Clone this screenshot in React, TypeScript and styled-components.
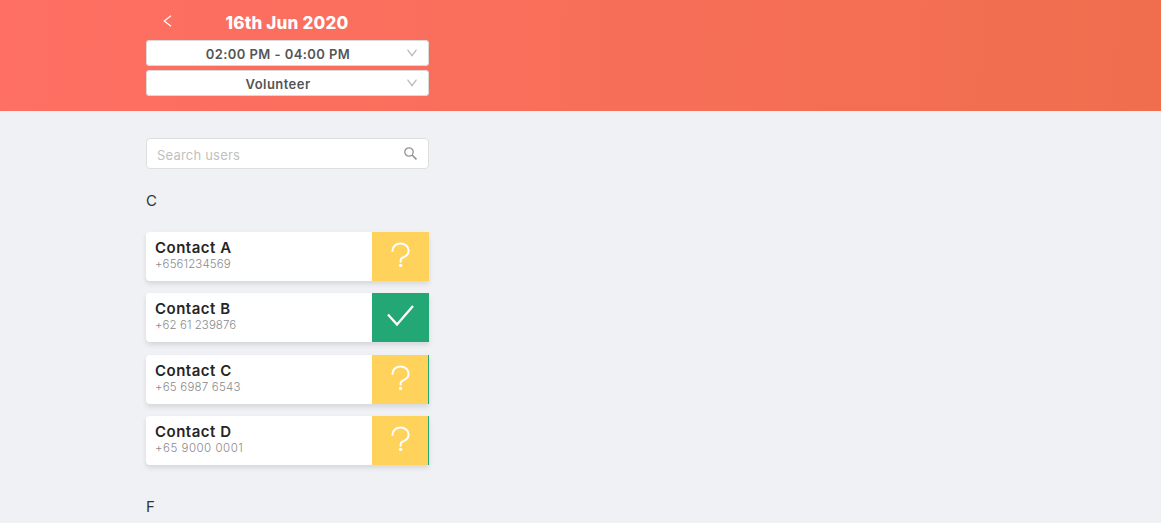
import styled, { createGlobalStyle } from "styled-components"


const GlobalStyle = createGlobalStyle`
	* {
		box-sizing: border-box;
	}

	body {
		margin: 0;
		background-color: #eff1f5;
		font-family: Gotham, Inter, sans-serif;
		overflow: hidden;
	}
`

const Page = styled.div`
	height: 523px;
	overflow: hidden;
`

const Header = styled.header`
	height: 111px;
	padding: 6px 0 0 146px;
	background: linear-gradient(93deg, #ff6f64 0%, #f06e4e 100%);
`

const Column = styled.div`
	width: 283px;
`

const TitleBar = styled.div`
	height: 34px;
	display: flex;
	align-items: flex-start;
`

const BackButton = styled.button`
	width: 42px;
	height: 30px;
	padding: 0 0 0 16px;
	border: none;
	background: none;
	display: flex;
	align-items: center;
`

const Title = styled.h1`
	flex: 1;
	margin: 0;
	padding-right: 43px;
	color: white;
	font-size: 17px;
	font-weight: 800;
	line-height: 34px;
	letter-spacing: 0.2px;
	text-align: center;
`

const Select = styled.div<{ $spacing: number }>`
	height: 26px;
	margin-bottom: 4px;
	padding: 1px 11px 0 4px;
	border-radius: 4px;
	background-color: white;
	box-shadow: inset 0 0 0 1px #dcd8d8;
	display: flex;
	align-items: center;
	color: #555;
	font-size: 13px;
	font-weight: 600;
	letter-spacing: ${({ $spacing }) => $spacing}px;

	span {
		flex: 1;
		text-align: center;
	}

	svg {
		margin-top: -2px;
	}
`

const Content = styled.main`
	padding: 27px 0 0 146px;
`

const Search = styled.label`
	height: 31px;
	padding: 0 11px 0 10px;
	border: 1px solid #dddfdf;
	border-radius: 4px;
	background-color: white;
	display: flex;
	align-items: center;

	input {
		flex: 1;
		min-width: 0;
		padding: 2px 0 0;
		border: none;
		outline: none;
		background: none;
		font-family: inherit;
		font-size: 13px;
		letter-spacing: 0.2px;
	}

	input::placeholder {
		color: #bfbfbf;
		opacity: 1;
	}
`

const Letter = styled.h2`
	height: 20px;
	margin: 22px 0 21px;
	color: #333;
	font-size: 15px;
	font-weight: 400;
	line-height: 20px;
`

const Contacts = styled.section`
	display: flex;
	flex-direction: column;
	gap: 12.3px;
	margin-bottom: 32px;
`

const Card = styled.article`
	height: 49px;
	border-radius: 4px 0 0 4px;
	background-color: white;
	box-shadow: 0 3px 5px rgba(0, 0, 0, 0.11);
	display: flex;
`

const Details = styled.div`
	width: 226px;
	padding: 6px 0 0 9px;
`

const Name = styled.div`
	color: #252525;
	font-size: 15px;
	font-weight: 600;
	line-height: 19px;
	letter-spacing: 0.5px;
`

const Phone = styled.div<{ $spacing: number }>`
	color: #8a8a8a;
	font-size: 11.5px;
	font-weight: 300;
	line-height: 14px;
	letter-spacing: ${({ $spacing }) => $spacing}px;
`

const Status = styled.div<{ $confirmed: boolean, $edge: boolean }>`
	width: 57px;
	border-right: ${({ $edge }) => $edge ? "1px solid #22a775" : "none"};
	background-color: ${({ $confirmed }) => $confirmed ? "#22a775" : "#ffd25c"};

	svg {
		display: block;
	}
`

const contacts = [
	{ name: "Contact A", phone: "+6561234569", spacing: 0.1, confirmed: false, edge: false },
	{ name: "Contact B", phone: "+62 61 239876", spacing: 0.05, confirmed: true, edge: false },
	{ name: "Contact C", phone: "+65 6987 6543", spacing: 0.2, confirmed: false, edge: true },
	{ name: "Contact D", phone: "+65 9000 0001", spacing: 0.5, confirmed: false, edge: true },
]

const Chevron = () => (
	<svg width="12" height="8" viewBox="0 0 12 8" fill="none" stroke="#b5b5b5" strokeWidth="1.1">
		<path d="M1.5 .6 6 6.7 10.5 .6" />
	</svg>
)

const StatusIcon = ({ confirmed }: { confirmed: boolean }) => (
	<svg width="56" height="49" viewBox="0 0 56 49" fill="none" stroke="white" strokeWidth="2">
		{confirmed
			? <path d="M16 21.5 25 31.5 41 13" strokeWidth="2.3" />
			: <>
				<path d="M20.5 19.7V18.5C20.5 14.5 24 11.4 28.5 11.4S36.6 14.4 36.6 18.5C36.6 21.9 34.3 24.2 31.6 25.2C29.6 25.9 28.6 27 28.6 28.6V30.4" />
				<circle cx="28.6" cy="33.4" r="1.7" fill="white" stroke="none" />
			</>}
	</svg>
)

const App = () => {
	return <Page>
		<GlobalStyle />
		<Header>
			<Column>
				<TitleBar>
					<BackButton aria-label="Back">
						<svg width="11" height="12" viewBox="0 0 11 12" fill="none" stroke="white" strokeWidth="1.2">
							<path d="M9 .8 2.3 6 9 11.2" />
						</svg>
					</BackButton>
					<Title>16th Jun 2020</Title>
				</TitleBar>
				<Select $spacing={0.43}>
					<span>02:00 PM - 04:00 PM</span>
					<Chevron />
				</Select>
				<Select $spacing={0.45}>
					<span>Volunteer</span>
					<Chevron />
				</Select>
			</Column>
		</Header>
		<Content>
			<Column>
				<Search>
					<input placeholder="Search users" />
					<svg width="13" height="13" viewBox="0 0 13 13" fill="none" stroke="#929292" strokeWidth="1.3">
						<circle cx="5" cy="5" r="4.2" />
						<path d="M8 8 12.5 12.3" strokeWidth="1.6" />
					</svg>
				</Search>
				<Letter>C</Letter>
				<Contacts>
					{contacts.map(contact => (
						<Card key={contact.name}>
							<Details>
								<Name>{contact.name}</Name>
								<Phone $spacing={contact.spacing}>{contact.phone}</Phone>
							</Details>
							<Status $confirmed={contact.confirmed} $edge={contact.edge}>
								<StatusIcon confirmed={contact.confirmed} />
							</Status>
						</Card>
					))}
				</Contacts>
				<Letter>F</Letter>
			</Column>
		</Content>
	</Page>
}

export default App
